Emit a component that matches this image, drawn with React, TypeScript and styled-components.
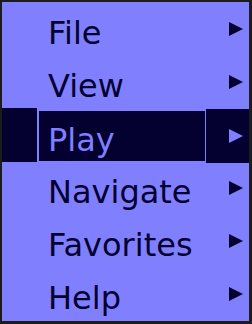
import styled, { createGlobalStyle } from "styled-components";

const GlobalStyle = createGlobalStyle`
  html, body {
    margin: 0;
    padding: 0;
    background: #8080ff;
  }
  #root {
    width: 252px;
    height: 324px;
  }
`;

const items = ["File", "View", "Play", "Navigate", "Favorites", "Help"];
const selectedIndex = 2;

const Menu = styled.div`
  box-sizing: border-box;
  width: 252px;
  height: 324px;
  display: flex;
  flex-direction: column;
  background: #8080ff;
  border-style: solid;
  border-color: #1c1c1c;
  border-width: 2px 3px 3px 2px;
  font-family: "Comic Sans MS", "DejaVu Sans", sans-serif;
`;

const Row = styled.div`
  flex: 1;
  display: grid;
  grid-template-columns: 35px 167px 43px;
  column-gap: 1px;
`;

const IconCell = styled.div<{ $selected: boolean }>`
  background: ${(p) => (p.$selected ? "#04002f" : "transparent")};
`;

const LabelCell = styled.div<{ $selected: boolean }>`
  display: flex;
  align-items: center;
  box-sizing: border-box;
  padding: 8px 0 0 9px;
  margin: ${(p) => (p.$selected ? "3px 0 1px 1px" : "0 0 0 1px")};
  background: ${(p) => (p.$selected ? "#04002f" : "transparent")};
  color: ${(p) => (p.$selected ? "#7f7fff" : "#04002f")};
  font-size: 32px;
  line-height: 1;
  white-space: nowrap;
`;

const ArrowCell = styled.div<{ $selected: boolean }>`
  display: flex;
  align-items: center;
  justify-content: flex-end;
  padding-right: 6px;
  margin: ${(p) => (p.$selected ? "1px 0 -1px 0" : "0")};
  background: ${(p) => (p.$selected ? "#04002f" : "transparent")};
  color: ${(p) => (p.$selected ? "#7f7fff" : "#04002f")};
`;

const Arrow = () => (
  <svg width="14" height="14" viewBox="0 0 14 14">
    <polygon points="0,0 14,7 0,14" fill="currentColor" />
  </svg>
);

export default function App() {
  return (
    <>
      <GlobalStyle />
      <Menu>
        {items.map((label, i) => {
          const sel = i === selectedIndex;
          return (
            <Row key={label}>
              <IconCell $selected={sel} />
              <LabelCell $selected={sel}>{label}</LabelCell>
              <ArrowCell $selected={sel}>
                <Arrow />
              </ArrowCell>
            </Row>
          );
        })}
      </Menu>
    </>
  );
}
